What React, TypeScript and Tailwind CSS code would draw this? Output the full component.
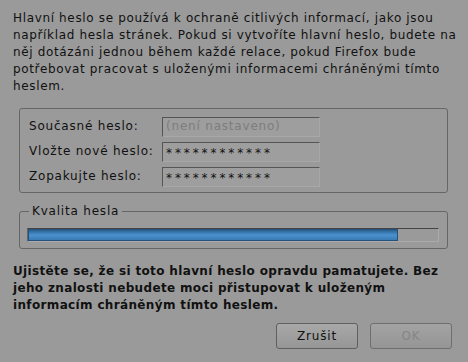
import React from "react";

export default function App() {
  const font = { fontFamily: '"DejaVu Sans", Verdana, sans-serif' };
  return (
    <div
      className="w-[468px] h-[362px] bg-[#9a9a9a] text-[#111] text-[12px] leading-[17px] tracking-[0.65px] overflow-hidden relative"
      style={font}
    >
      <div className="pl-[13px] pt-[10px]">
        <p className="whitespace-nowrap">
          Hlavní heslo se používá k ochraně citlivých informací, jako jsou
          <br />
          například hesla stránek. Pokud si vytvoříte hlavní heslo, budete na
          <br />
          něj dotázáni jednou během každé relace, pokud Firefox bude
          <br />
          potřebovat pracovat s uloženými informacemi chráněnými tímto
          <br />
          heslem.
        </p>
      </div>
      <div className="ml-[19px] mt-[13px] w-[429px] h-[85px] border border-[#666] rounded-[3px] pl-[9px] pt-[7px] flex flex-col gap-[4px]">
        {[
          { label: "Současné heslo:", value: "(není nastaveno)", ph: true },
          { label: "Vložte nové heslo:", value: "************", ph: false },
          { label: "Zopakujte heslo:", value: "************", ph: false },
        ].map((r) => (
          <div key={r.label} className="flex items-center h-[21px]">
            <div className="w-[133px] whitespace-nowrap tracking-[0.8px]">{r.label}</div>
            <div className="w-[158px] h-[20px] border border-t-[#555] border-l-[#555] border-r-[#a8a8a8] border-b-[#a8a8a8] bg-[#9e9e9e] pl-[3px] flex items-center overflow-hidden">
              {r.ph ? (
                <span className="text-[#7d7d7d] whitespace-nowrap tracking-[0.8px]">{r.value}</span>
              ) : (
                <span className="tracking-[2.9px] pt-[3px]">{r.value}</span>
              )}
            </div>
          </div>
        ))}
      </div>
      <fieldset className="ml-[19px] mt-[10px] w-[429px] h-[46px] border border-[#666] rounded-[3px] pl-[7px] pr-[8px] pt-[8px]">
        <legend className="ml-[2px] px-[3px] leading-[17px] tracking-[0.8px]">Kvalita hesla</legend>
        <div className="h-[14px] w-[412px] border border-t-[#444] border-l-[#666] border-r-[#aaa] border-b-[#aaa] flex">
          <div className="w-[370px] h-full border border-[#23527c] bg-gradient-to-b from-[#2a5f8e] via-[#4a92cf] to-[#3a7ab3]" />
        </div>
      </fieldset>
      <div className="pl-[13px] pt-[14px] font-bold tracking-[0.35px]">
        <p className="whitespace-nowrap">
          Ujistěte se, že si toto hlavní heslo opravdu pamatujete. Bez
          <br />
          jeho znalosti nebudete moci přistupovat k uloženým
          <br />
          informacím chráněným tímto heslem.
        </p>
      </div>
      <div className="flex justify-end gap-[12px] pr-[16px] mt-[9px]">
        <button className="w-[82px] h-[26px] border border-[#5f5f5f] rounded-[3px] bg-gradient-to-b from-[#a8a8a8] to-[#969696] text-[#111] tracking-[0.8px]" style={font}>
          Zrušit
        </button>
        <button className="w-[82px] h-[26px] border border-[#6e6e6e] rounded-[3px] bg-gradient-to-b from-[#a3a3a3] to-[#959595] text-[#858585] tracking-[0.8px]" style={font}>
          OK
        </button>
      </div>
    </div>
  );
}
